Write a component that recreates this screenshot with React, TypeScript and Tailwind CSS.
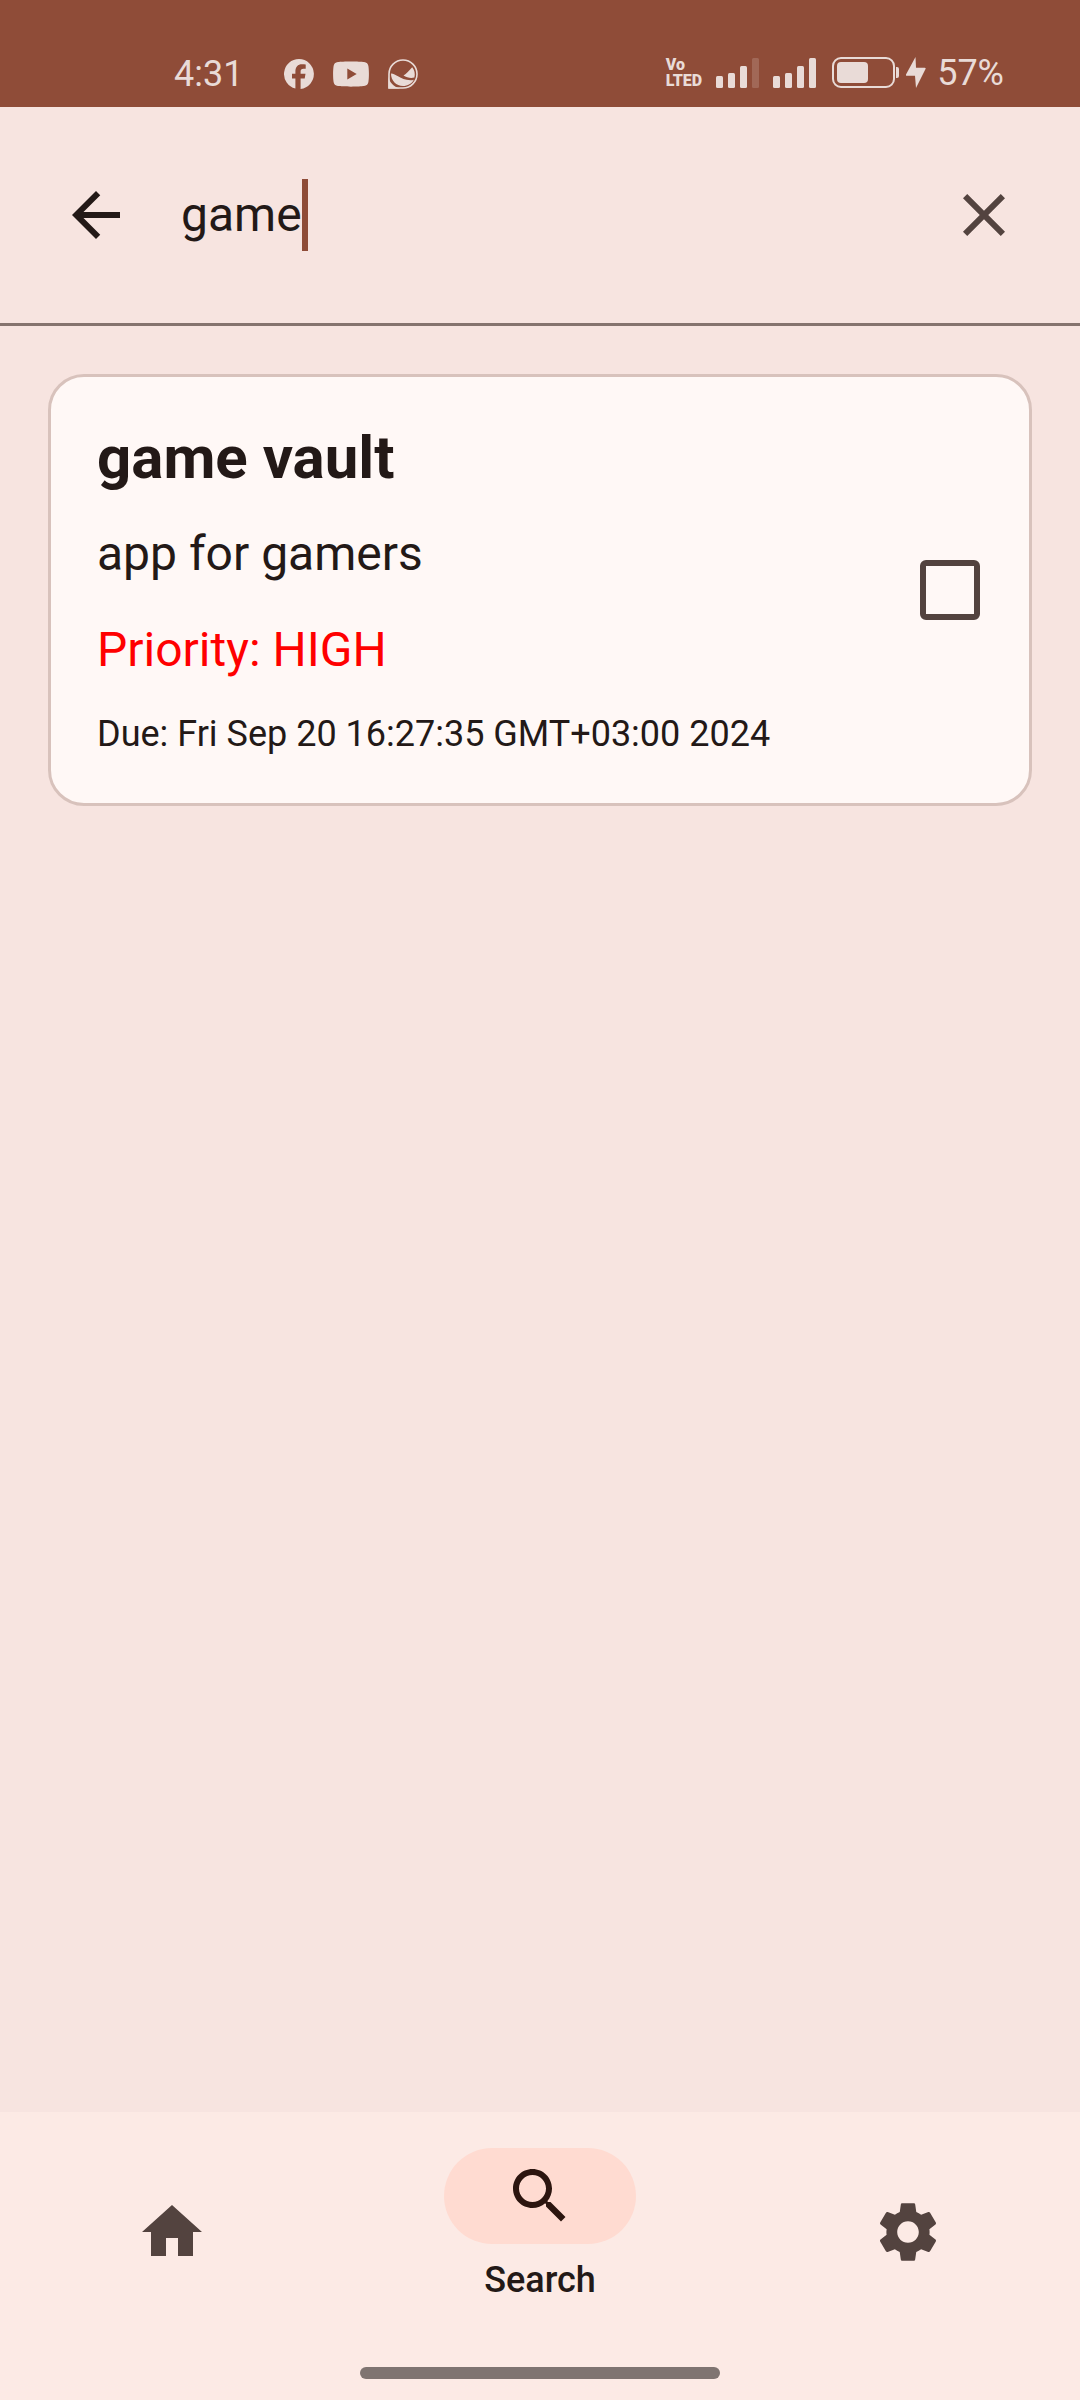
import { useState } from "react";

function FacebookIcon() {
  return (
    <svg width="30" height="30" viewBox="0 0 30 30" fill="currentColor" aria-hidden="true">
      <path d="M15 0a15 15 0 0 0-3.6 29.56V19.6H8V14.8h3.4v-2.3c0-4.7 2.3-7.3 6.7-7.3 1.1 0 2.6.1 3.6.4v4.1h-2.2c-2.1 0-2.9.8-2.9 2.7v2.4h4.9l-.8 4.8h-4.1v10.3A15 15 0 0 0 15 0z" />
    </svg>
  );
}

function YoutubeIcon() {
  return (
    <svg width="36" height="26" viewBox="0 0 36 26" fill="currentColor" aria-hidden="true">
      <path
        fillRule="evenodd"
        d="M5 .9C9 .2 27 .2 31 .9c2.800.4 4 1.800 4.400 4.100.7 4 .7 12 0 16-.4 2.300-1.600 3.700-4.400 4.100-4 .7-22 .7-26 0C2.200 24.700 1 23.300.6 21c-.7-4-.7-12 0-16C1 2.700 2.200 1.300 5 .9zM14.300 7.600v10.800L23.700 13z"
      />
    </svg>
  );
}

function WaveBadgeIcon() {
  return (
    <svg width="30" height="30" viewBox="0 0 30 30" aria-hidden="true">
      <path
        d="M1 29V15A14 14 0 1 1 15 29z"
        fill="none"
        stroke="currentColor"
        strokeWidth="1.600"
      />
      <path d="M.4 17.500C1.500 23.500 5.500 27.500 12 29.500H.4z" fill="currentColor" />
      <path
        d="M3 14.500c5 0 8.500 6 19.500 6.800 1.300 0 2.300-.2 3.300-.6C23.800 24.600 19.700 27 15 27 8.300 27 2.900 21.500 3 14.500z"
        fill="currentColor"
      />
      <path
        d="M15.500 16.500c3-1.500 5.500-5 8.700-8.200 2.300 2.800 3.200 6.700 2.200 10.300-3.500 1-7.800.1-10.900-2.100z"
        fill="currentColor"
      />
    </svg>
  );
}

function SignalIcon({ weak }: { weak?: boolean }) {
  return (
    <svg width="43" height="30" viewBox="0 0 43 30" fill="currentColor" aria-hidden="true">
      <rect x="0" y="18" width="7" height="12" rx="1.500" />
      <rect x="12" y="15" width="7" height="15" rx="1.500" />
      <rect x="24" y="8" width="7" height="22" rx="1.500" />
      <rect x="36" y="0" width="7" height="30" rx="1.500" opacity={weak ? 0.2 : 1} />
    </svg>
  );
}

function BatteryIcon() {
  return (
    <svg width="67" height="31" viewBox="0 0 67 31" fill="currentColor" aria-hidden="true">
      <rect x="1" y="1" width="61" height="29" rx="8" fill="none" stroke="currentColor" strokeWidth="2" />
      <rect x="5" y="5" width="31" height="21" rx="4" />
      <path d="M64 10h1a2 2 0 0 1 2 2v7a2 2 0 0 1-2 2h-1z" />
    </svg>
  );
}

function BoltIcon() {
  return (
    <svg width="20" height="31" viewBox="0 0 20 31" fill="currentColor" aria-hidden="true">
      <path d="M9.500 0 0 17.500q-.4 1.200.8 1.200H9L10 31l9.500-19q.6-1.300-.8-1.300H10z" />
    </svg>
  );
}

function MaterialIcon({ d }: { d: string }) {
  return (
    <svg width="72" height="72" viewBox="0 0 24 24" fill="currentColor" aria-hidden="true">
      <path d={d} />
    </svg>
  );
}

const icons = {
  back: "M20 11H7.830l5.590-5.590L12 4l-8 8 8 8 1.410-1.410L7.830 13H20v-2z",
  close:
    "M19 6.410L17.590 5 12 10.590 6.410 5 5 6.410 10.590 12 5 17.590 6.410 19 12 13.410 17.590 19 19 17.590 13.410 12z",
  home: "M10 20v-6h4v6h5v-8h3L12 3 2 12h3v8z",
  search:
    "M15.500 14h-.79l-.28-.27C15.410 12.590 16 11.110 16 9.500 16 5.910 13.090 3 9.500 3S3 5.910 3 9.500 5.910 16 9.500 16c1.610 0 3.090-.59 4.230-1.570l.27.28v.79l5 4.990L20.490 19l-4.990-5zm-6 0C7.010 14 5 11.990 5 9.500S7.010 5 9.500 5 14 7.010 14 9.500 11.990 14 9.500 14z",
  settings:
    "M19.140 12.940c.04-.3.06-.61.06-.94 0-.32-.02-.64-.07-.94l2.030-1.580c.18-.14.23-.41.12-.61l-1.920-3.320c-.12-.22-.37-.29-.59-.22l-2.390.96c-.5-.38-1.030-.7-1.620-.94L14.400 2.810c-.04-.24-.24-.41-.48-.41h-3.840c-.24 0-.43.17-.47.41L9.250 5.350c-.59.24-1.130.57-1.620.94L5.240 5.330c-.22-.08-.47 0-.59.22L2.740 8.870c-.12.21-.08.47.12.61l2.030 1.580c-.05.3-.09.63-.09.94s.02.64.07.94l-2.030 1.580c-.18.14-.23.41-.12.61l1.920 3.320c.12.22.37.29.59.22l2.390-.96c.5.38 1.030.7 1.620.94l.36 2.540c.05.24.24.41.48.41h3.840c.24 0 .44-.17.47-.41l.36-2.540c.59-.24 1.130-.56 1.620-.94l2.390.96c.22.08.47 0 .59-.22l1.920-3.320c.12-.22.07-.47-.12-.61l-2.010-1.580zM12 15.600c-1.980 0-3.600-1.620-3.600-3.600s1.620-3.600 3.600-3.600 3.600 1.620 3.600 3.600-1.620 3.600-3.600 3.600z",
};

function StatusBar() {
  return (
    <div className="flex items-center justify-between bg-[#8f4c38] pt-10 pr-[76px] pl-[174px] text-[#e9dbd7]">
      <div className="flex h-[67px] items-center gap-[19px]">
        <span className="w-[91px] text-[36px] leading-[48px]">4:31</span>
        <FacebookIcon />
        <YoutubeIcon />
        <WaveBadgeIcon />
      </div>
      <div className="flex h-[67px] items-center pb-0.5">
        <span className="mr-[14px] text-[16px] leading-4 font-black">
          Vo
          <br />
          LTED
        </span>
        <span className="mr-[14px]">
          <SignalIcon weak />
        </span>
        <span className="mr-4">
          <SignalIcon />
        </span>
        <BatteryIcon />
        <span className="mr-[11px] ml-[7px]">
          <BoltIcon />
        </span>
        <span className="text-[36px] leading-[48px]">57%</span>
      </div>
    </div>
  );
}

function SearchBar({ value, onChange }: { value: string; onChange: (value: string) => void }) {
  return (
    <header className="flex items-center border-b-[3px] border-[#85736e] px-6 py-9">
      <button
        type="button"
        aria-label="Back"
        className="flex size-36 shrink-0 items-center justify-center"
      >
        <MaterialIcon d={icons.back} />
      </button>
      <div className="ml-3 flex min-w-0 flex-1 items-center">
        <input
          type="text"
          aria-label="Search tasks"
          value={value}
          onChange={(event) => onChange(event.target.value)}
          className="field-sizing-content h-[72px] max-w-full pl-px text-[48px] leading-[72px] caret-transparent outline-none"
        />
        <span className="h-[72px] w-[6px] shrink-0 bg-[#8f4c38]" />
      </div>
      <button
        type="button"
        aria-label="Clear search"
        onClick={() => onChange("")}
        className="flex size-36 shrink-0 items-center justify-center text-[#53433f]"
      >
        <MaterialIcon d={icons.close} />
      </button>
    </header>
  );
}

function TaskCard() {
  const [done, setDone] = useState(false);
  return (
    <article className="flex items-center justify-between gap-6 rounded-[36px] border-[3px] border-[#d8c2bc] bg-[#fff8f6] py-[45px] pr-[49px] pl-[46px]">
      <div className="flex min-w-0 flex-col gap-6">
        <h2 id="task-title" className="text-[60px] leading-[72px] font-bold">
          game vault
        </h2>
        <p className="text-[48px] leading-[72px]">app for gamers</p>
        <p className="text-[48px] leading-[72px] text-[#ff0000]">Priority: HIGH</p>
        <p className="text-[36px] leading-[48px]">Due: Fri Sep 20 16:27:35 GMT+03:00 2024</p>
      </div>
      <input
        type="checkbox"
        aria-labelledby="task-title"
        checked={done}
        onChange={(event) => setDone(event.target.checked)}
        className="size-[60px] shrink-0 appearance-none rounded-[6px] border-[6px] border-[#53433f] checked:bg-[#8f4c38]"
      />
    </article>
  );
}

function BottomNav() {
  return (
    <footer className="bg-[#fceae5]">
      <nav className="grid h-60 grid-cols-3 gap-6 text-[#53433f]">
        <button type="button" aria-label="Home" className="flex items-center justify-center">
          <MaterialIcon d={icons.home} />
        </button>
        <button
          type="button"
          aria-current="page"
          className="flex flex-col items-center justify-center gap-3 pb-3"
        >
          <span className="flex h-24 w-48 items-center justify-center rounded-full bg-[#ffdbd1] text-[#2c150f]">
            <MaterialIcon d={icons.search} />
          </span>
          <span className="text-[36px] leading-[48px] font-medium text-[#231917]">Search</span>
        </button>
        <button type="button" aria-label="Settings" className="flex items-center justify-center">
          <MaterialIcon d={icons.settings} />
        </button>
      </nav>
      <div className="flex h-12 justify-center pt-[15px]">
        <span className="h-3 w-1/3 rounded-full bg-[#7f7471]" />
      </div>
    </footer>
  );
}

export default function App() {
  const [query, setQuery] = useState("game");
  return (
    <div className="flex min-h-screen flex-col bg-[#f7e4e0] font-['Roboto',sans-serif] text-[#231917]">
      <StatusBar />
      <SearchBar value={query} onChange={setQuery} />
      <main className="flex-1 p-12">
        <TaskCard />
      </main>
      <BottomNav />
    </div>
  );
}
